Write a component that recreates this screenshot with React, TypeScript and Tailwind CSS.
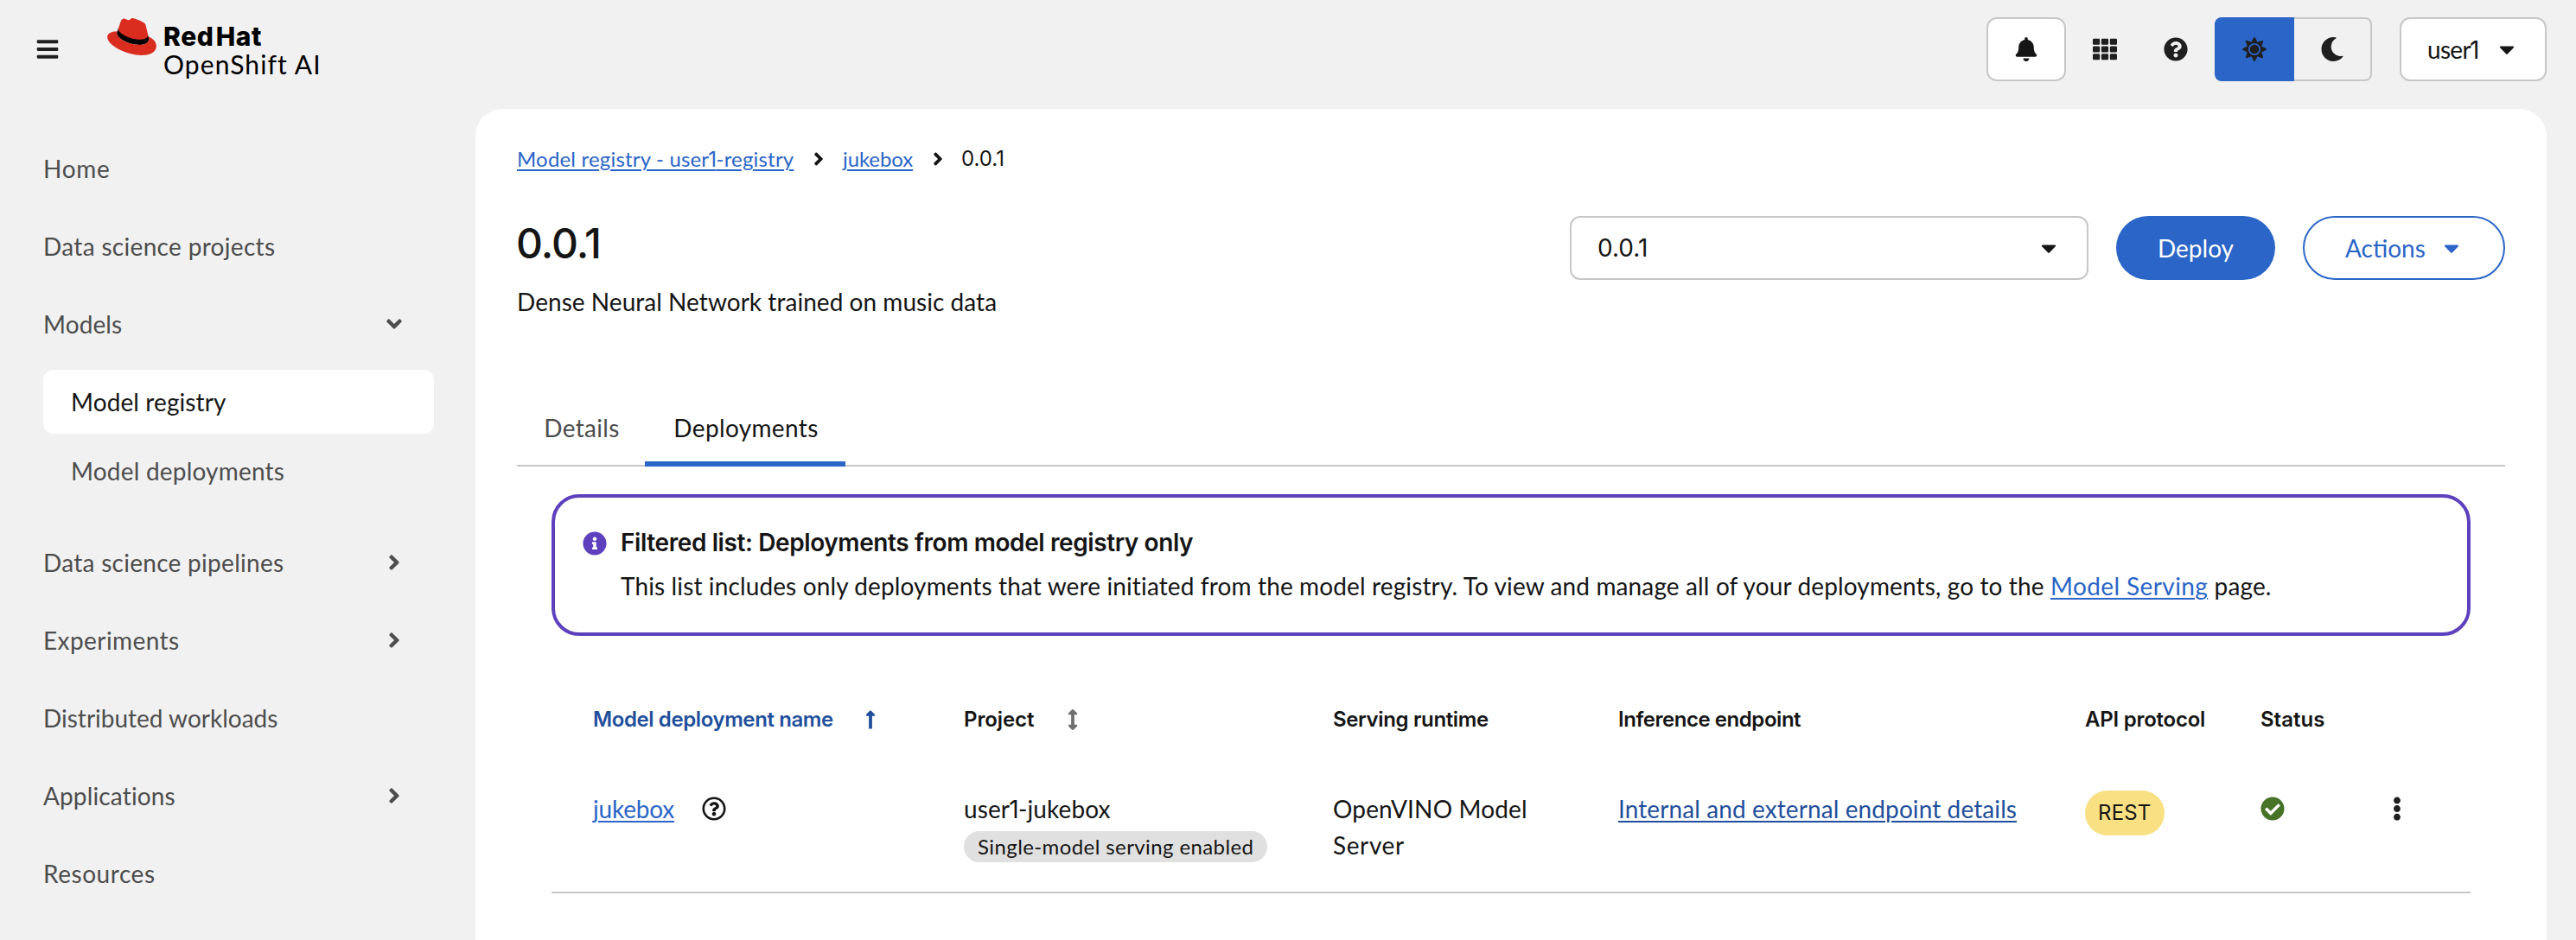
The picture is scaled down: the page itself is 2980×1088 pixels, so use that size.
import React from 'react';
import {
  FaAngleDown,
  FaAngleRight,
  FaArrowsAltV,
  FaBars,
  FaBell,
  FaCaretDown,
  FaCheckCircle,
  FaEllipsisV,
  FaInfoCircle,
  FaLongArrowAltUp,
  FaMoon,
  FaQuestionCircle,
  FaRegQuestionCircle,
  FaSun,
  FaTh,
} from 'react-icons/fa';

function RedHatLogo() {
  return (
    <svg viewBox="0 2.9 24 18.2" className="mt-px h-[43px] w-[57px]" aria-hidden="true">
      <path
        fill="#000"
        d="M20.11 11.951c.218 1.032.218 1.14.218 1.277 0 1.765-1.984 2.745-4.593 2.745-5.895.004-11.06-3.451-11.06-5.734a2.326 2.326 0 0 1 .19-.925L5.4 8 19.7 10.4Z"
      />
      <path
        fill="#da2d20"
        d="M16.009 13.386c1.577 0 3.86-.326 3.86-2.202a1.765 1.765 0 0 0-.04-.431l-.94-4.08c-.216-.898-.406-1.305-1.982-2.093-1.223-.625-3.888-1.658-4.676-1.658-.733 0-.947.946-1.822.946-.842 0-1.467-.706-2.255-.706-.757 0-1.25.515-1.63 1.576 0 0-1.06 2.99-1.197 3.424a.81.81 0 0 0-.028.245c0 1.162 4.577 4.974 10.71 4.974m4.101-1.435c.218 1.032.218 1.14.218 1.277 0 1.765-1.984 2.745-4.593 2.745-5.895.004-11.06-3.451-11.06-5.734a2.326 2.326 0 0 1 .19-.925C2.746 9.415 0 9.794 0 12.217c0 3.969 9.405 8.861 16.851 8.861 5.71 0 7.149-2.582 7.149-4.62 0-1.605-1.387-3.425-3.887-4.512"
      />
    </svg>
  );
}

/** Plain numeral one, drawn without a foot serif. */
function One() {
  return <span className="-ml-px font-['Inter'] tracking-[-0.5px]">1</span>;
}

function TopBar() {
  return (
    <header className="flex h-[126px] pl-[41px] pr-[34px]">
      <button className="mt-[43px] h-7 w-7 text-[28px] text-[#1f1f1f]" aria-label="Menu">
        <FaBars />
      </button>
      <div className="ml-[55px] mt-5 flex h-[74px]">
        <RedHatLogo />
        <div className="ml-[8px] whitespace-nowrap text-[30px] leading-[32px] text-black">
          <div className="mt-[6px] font-['Inter'] font-extrabold tracking-[0.6px] [word-spacing:-5px]">Red Hat</div>
          <div className="tracking-[1.1px]">OpenShift AI</div>
        </div>
      </div>
      <div className="ml-auto mt-5 flex h-[74px] items-stretch text-[28px] text-[#1f1f1f]">
        <button className="grid w-[92px] place-items-center rounded-xl border-2 border-[#c7c7c7] bg-white text-[#151515]">
          <FaBell />
        </button>
        <button className="ml-1 grid w-[82px] place-items-center">
          <FaTh />
        </button>
        <button className="mr-1 grid w-[82px] place-items-center">
          <FaQuestionCircle />
        </button>
        <div className="flex">
          <button className="grid w-[92px] place-items-center rounded-l-lg bg-[#2a65c7]">
            <FaSun />
          </button>
          <button className="grid w-[90px] place-items-center rounded-r-lg border-y-2 border-r-2 border-[#c7c7c7]">
            <FaMoon />
          </button>
        </div>
        <button className="ml-8 flex w-[170px] items-center rounded-xl border-2 border-[#c7c7c7] bg-white pl-[30px] text-[#151515]">
          <span className="w-[78px] text-left tracking-[-0.7px]">
            user
            <One />
          </span>
          <FaCaretDown />
        </button>
      </div>
    </header>
  );
}

function NavItem({ label, track, icon }: { label: string; track: string; icon?: 'right' | 'down' }) {
  return (
    <a className="flex h-[74px] items-center justify-between">
      <span className={track}>{label}</span>
      {icon && (
        <span className="grid w-[92px] place-items-center">
          {icon === 'right' ? <FaAngleRight /> : <FaAngleDown />}
        </span>
      )}
    </a>
  );
}

function Sidebar() {
  return (
    <nav className="ml-[50px] mt-[32px] flex w-[452px] shrink-0 flex-col gap-4 whitespace-nowrap text-[28px] text-[#4d4d4d]">
      <NavItem label="Home" track="tracking-[0.7px]" />
      <NavItem label="Data science projects" track="tracking-[0.32px]" />
      <NavItem label="Models" track="tracking-[0.1px]" icon="down" />
      <div className="mb-4 flex flex-col gap-1.5">
        <a className="flex h-[74px] items-center rounded-xl bg-white pl-8 tracking-[0.1px] text-[#151515]">
          Model registry
        </a>
        <a className="flex h-[74px] items-center pl-8 tracking-[0.2px]">Model deployments</a>
      </div>
      <NavItem label="Data science pipelines" track="tracking-[0.28px]" icon="right" />
      <NavItem label="Experiments" track="tracking-[0.42px]" icon="right" />
      <NavItem label="Distributed workloads" track="" />
      <NavItem label="Applications" track="tracking-[0.14px]" icon="right" />
      <NavItem label="Resources" track="tracking-[0.55px]" />
    </nav>
  );
}

const link = 'underline decoration-2 underline-offset-[3px]';

function Breadcrumb() {
  return (
    <div className="flex h-9 items-center whitespace-nowrap text-[24px] text-[#151515]">
      <a className={`${link} w-[321px] tracking-[0.18px] text-[#2a65c7]`}>
        Model registry - user
        <One />
        -registry
      </a>
      <FaAngleRight className="ml-[16px]" />
      <a className={`${link} ml-[16px] w-[82px] tracking-[-0.1px] text-[#2a65c7]`}>jukebox</a>
      <FaAngleRight className="ml-[16px]" />
      <span className="ml-[15px] font-['Inter']">0.0.1</span>
    </div>
  );
}

function TitleRow() {
  return (
    <div className="mt-[48px] flex justify-between whitespace-nowrap text-[28px] text-[#151515]">
      <div>
        <h1 className="-ml-px font-['Inter'] text-[48px] font-medium leading-[64px] tracking-[-1px]">0.0.1</h1>
        <p className="mt-[14px] leading-[42px] tracking-[0.04px]">Dense Neural Network trained on music data</p>
      </div>
      <div className="flex h-[74px] items-stretch">
        <button className="flex w-[600px] items-center justify-between rounded-xl border-2 border-[#c7c7c7] pl-[30px] pr-[30px]">
          <span className="font-['Inter']">0.0.1</span>
          <FaCaretDown />
        </button>
        <button className="ml-8 w-[184px] rounded-full bg-[#2a65c7] text-white">Deploy</button>
        <button className="ml-8 flex w-[234px] items-center rounded-full border-2 border-[#2a65c7] pl-[47px] text-[#2a65c7]">
          <span className="w-[109px] text-left">Actions</span>
          <FaCaretDown />
        </button>
      </div>
    </div>
  );
}

function Tabs() {
  return (
    <div className="mt-[84px] flex h-[86px] border-b-2 border-[#c7c7c7] text-[28px] leading-[42px]">
      <button className="w-[148px] pb-[2px] pl-[2px] tracking-[0.3px] text-[#4d4d4d]">Details</button>
      <button className="-mb-0.5 w-[232px] border-b-[6px] border-[#2a65c7] pl-[2px] tracking-[0.35px] text-[#151515]">
        <span className="relative top-px">Deployments</span>
      </button>
    </div>
  );
}

function FilterAlert() {
  return (
    <div className="mt-8 flex h-[164px] rounded-[32px] border-4 border-[#5e40be] pl-8 pt-[31px] text-[28px] leading-[42px] text-[#151515]">
      <FaInfoCircle className="mt-2 shrink-0 text-[#5e40be]" />
      <div className="ml-4 whitespace-nowrap">
        <h2 className="font-['Inter'] font-semibold tracking-[-0.4px]">
          Filtered list: Deployments from model registry only
        </h2>
        <p className="mt-2 tracking-[0.125px]">
          This list includes only deployments that were initiated from the model registry. To view and manage all of
          your deployments, go to the{' '}
          <a className={`${link} tracking-[0.4px] text-[#2a65c7]`}>Model Serving</a> page.
        </p>
      </div>
    </div>
  );
}

const columns = 'grid grid-cols-[429px_427px_330px_540px_203px_154px_1fr] pl-12 text-[#151515] whitespace-nowrap';

function DeploymentsTable() {
  return (
    <div className="mt-12">
      <div className={`${columns} h-[98px] items-center font-['Inter'] text-[24px] font-semibold`}>
        <div className="flex items-center text-[#1f4f9c]">
          <span className="w-[309px] tracking-[-0.4px]">Model deployment name</span>
          <FaLongArrowAltUp />
        </div>
        <div className="flex items-center">
          <span className="w-[114px] tracking-[-0.1px]">Project</span>
          <FaArrowsAltV className="text-[#707070]" />
        </div>
        <div className="tracking-[-0.36px]">Serving runtime</div>
        <div className="tracking-[-0.45px]">Inference endpoint</div>
        <div className="tracking-[-0.24px]">API protocol</div>
        <div>Status</div>
      </div>
      <div className={`${columns} h-[152px] items-start border-b-2 border-[#c7c7c7] pt-[33px] text-[28px] leading-[42px]`}>
        <div className="flex items-center">
          <a className={`${link} w-[126px] tracking-[-0.2px] text-[#2a65c7]`}>jukebox</a>
          <FaRegQuestionCircle />
        </div>
        <div>
          <div className="tracking-[0.1px]">
            user
            <One />
            -jukebox
          </div>
          <div className="mt-1 flex h-9 w-[351px] items-center rounded-[18px] bg-[#e0e0e0] pl-4 text-[24px] tracking-[0.4px]">
            Single-model serving enabled
          </div>
        </div>
        <div className="tracking-[0.15px]">
          OpenVINO Model
          <br />
          <span className="tracking-[0.6px]">Server</span>
        </div>
        <a className={`${link} tracking-[0.1px] text-[#1f4f9c]`}>Internal and external endpoint details</a>
        <div className="flex h-[52px] w-[92px] items-center rounded-full bg-[#f9e082] pl-[15px] font-['Inter'] text-[24px] tracking-[0.2px]">
          REST
        </div>
        <FaCheckCircle className="mt-[7px] text-[#467328]" />
        <FaEllipsisV className="-ml-[10px] mt-[7px] text-[#1f1f1f]" />
      </div>
    </div>
  );
}

export default function App() {
  return (
    <div className="h-[1088px] w-[2980px] overflow-hidden bg-[#f1f1f1] font-['Lato',sans-serif]">
      <TopBar />
      <div className="flex h-[962px]">
        <Sidebar />
        <main className="ml-12 w-[2396px] rounded-t-[32px] bg-white px-12 pt-10">
          <Breadcrumb />
          <TitleRow />
          <Tabs />
          <div className="px-10">
            <FilterAlert />
            <DeploymentsTable />
          </div>
        </main>
      </div>
    </div>
  );
}
